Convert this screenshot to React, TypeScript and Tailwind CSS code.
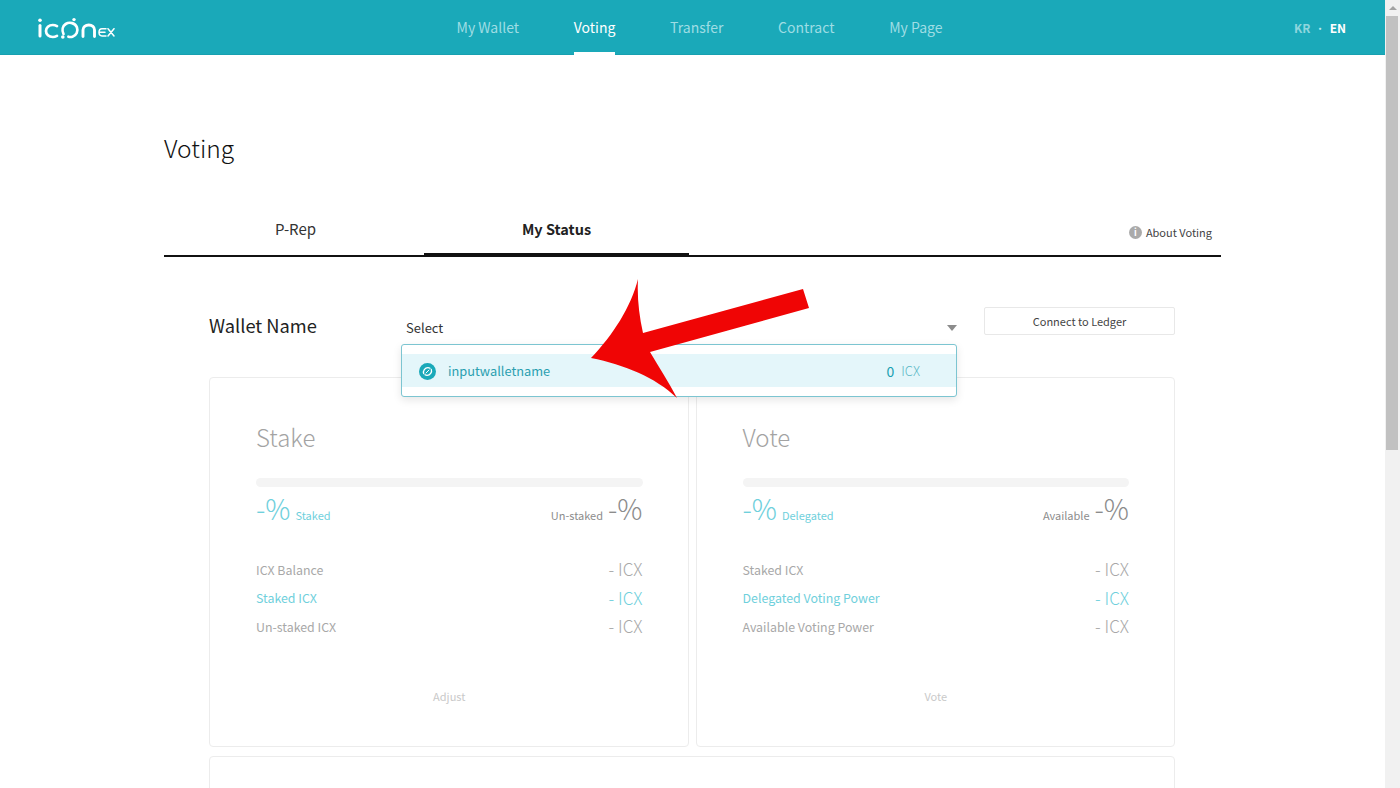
const navItems = ['My Wallet', 'Voting', 'Transfer', 'Contract', 'My Page']

function Logo() {
  return (
    <svg width="78" height="22" viewBox="0 0 78 22" fill="none" stroke="#fff" strokeLinecap="round" className="block">
      <circle cx="2" cy="3.300" r="1.800" fill="#fff" stroke="none" />
      <path d="M2 8.500v10.500" strokeWidth="3" />
      <path d="M19 9.200c-1.400-.8-2.800-1.200-4.200-1.200-4 0-6.800 2.700-6.800 6s2.800 6 6.800 6c1.400 0 2.800-.4 4.200-1.200" strokeWidth="2.700" />
      <path d="M25.500 17c-1.800-3.800-.9-8 2.200-10 4-2.600 9.500-.9 11.200 3.300 1.500 3.900-.5 8.200-4.400 9.400-1.400.4-2.800.4-4.100 0" strokeWidth="2.700" />
      <circle cx="24.800" cy="20" r="1.800" fill="#fff" stroke="none" />
      <circle cx="36" cy="2.600" r="1.700" fill="#fff" stroke="none" />
      <path d="M45 19.500v-6.500c0-3 2.500-5 5.800-5s5.700 2 5.700 5v6.500" strokeWidth="2.900" />
      <path d="M68 11.700h-4c-1.600 0-3 1.500-3 3.600s1.400 3.600 3 3.600h4M61.500 15.300h5.500" strokeWidth="1.500" />
      <path d="M70 11.700l6 7.200M76 11.700l-6 7.200" strokeWidth="1.500" />
    </svg>
  )
}

function WalletIcon() {
  return (
    <svg width="17" height="17" viewBox="0 0 17 17" fill="none" stroke="#fff" strokeLinecap="round">
      <circle cx="8.500" cy="8.500" r="8.500" fill="#1aa9b9" stroke="none" />
      <path d="M4.700 10.600c-1-2.800 1.200-6 4.200-6 .8 0 1.500.2 2.100.6" strokeWidth="1.300" />
      <path d="M12.300 6.400c1 2.800-1.200 6-4.200 6-.8 0-1.500-.2-2.100-.6" strokeWidth="1.300" />
      <path d="M7 10l3-3" strokeWidth="1" />
    </svg>
  )
}

function Arrow() {
  return (
    <svg width="230" height="130" viewBox="0 0 230 130" className="absolute left-[585px] top-[275px] z-20">
      <path
        d="M6 83 C28 60 46 32 53 4 C52 22 54 40 58 58 L218 14 L224 33 L65 77 C74 92 84 108 92 123 C70 102 40 90 6 83 Z"
        fill="#f00505"
      />
    </svg>
  )
}

function Row({ label, accent }: { label: string; accent?: boolean }) {
  return (
    <div className={`flex h-[28.500px] items-center justify-between ${accent ? 'text-[#6fd0dc]' : 'text-[#a8a8a8]'}`}>
      <span className="text-[12.400px]">{label}</span>
      <span className="pb-[3px] text-[17px] font-light">- ICX</span>
    </div>
  )
}

function StatCard({
  title,
  left,
  right,
  rows,
  action,
}: {
  title: string
  left: string
  right: string
  rows: string[]
  action: string
}) {
  return (
    <div className="h-[370px] rounded-[4px] border border-[#ececec] pl-[46px] pr-[45px] pt-[42px]">
      <h3 className="text-[24px] leading-[34px] font-light text-[#a3a3a3]">{title}</h3>
      <div className="mt-[24px] h-[9px] rounded-full bg-[#f4f4f4]" />
      <div className="mt-[3px] flex h-[36px] items-center justify-between">
        <div className="flex items-baseline gap-[5px] text-[#6fd0dc]">
          <span className="text-[28px] leading-[36px] font-light">-%</span>
          <span className="text-[11px]">{left}</span>
        </div>
        <div className="flex items-baseline gap-[5px] text-[#8c8c8c]">
          <span className="text-[11px]">{right}</span>
          <span className="text-[28px] leading-[36px] font-light">-%</span>
        </div>
      </div>
      <div className="mt-[30px]">
        {rows.map((r, i) => (
          <Row key={r} label={r} accent={i === 1} />
        ))}
      </div>
      <div className="mt-[46px] text-center text-[11px] text-[#c9c9c9]">{action}</div>
    </div>
  )
}

export default function App() {
  return (
    <div className="relative flex h-[788px] overflow-hidden bg-white font-['Noto_Sans_CJK_KR','Noto_Sans',sans-serif]">
      <div className="w-[1385px] shrink-0">
        {/* Header */}
        <header className="relative flex h-[55px] items-start justify-center border-b border-[#17a0b0] bg-[#1aa9b9] pl-[14px]">
          <div className="absolute left-[38px] top-[17px]">
            <Logo />
          </div>
          <nav className="flex h-[55px] gap-[54.700px]">
            {navItems.map((item) => (
              <a
                key={item}
                className={`flex h-full items-center border-b-[3px] pt-[2px] text-[14px] ${
                  item === 'Voting' ? 'border-white text-white' : 'border-transparent text-[#9fdde4]'
                }`}
              >
                {item}
              </a>
            ))}
          </nav>
          <div className="absolute right-[39px] top-[19px] flex items-center gap-[6px] text-[12px] font-bold">
            <span className="text-[#8fd6de]">KR</span>
            <span className="text-[#bfe8ed]">·</span>
            <span className="text-white">EN</span>
          </div>
        </header>

        <main className="mx-auto w-[1057px]">
          <h1 className="pt-[75px] text-[24.500px] leading-[36px] font-light text-[#111]">Voting</h1>

          {/* Tabs */}
          <div className="mt-[47px] flex h-[44px] items-stretch border-b-2 border-[#111]">
            <button className="w-[260px] pb-[9px] pl-[3px] text-[15px] text-[#333]">P-Rep</button>
            <button className="w-[265px] pb-[11px] text-[14.500px] font-bold text-[#222] shadow-[inset_0_-2px_0_#111]">
              My Status
            </button>
            <div className="ml-auto flex items-center gap-[4px] pb-[4px] pr-[9px] text-[11px] text-[#444]">
              <span className="flex h-[13px] w-[13px] items-center justify-center rounded-full bg-[#aaa] text-[9px] font-bold leading-none text-white">
                i
              </span>
              About Voting
            </div>
          </div>

          {/* Wallet row */}
          <div className="relative ml-[45px] mt-[50px] flex h-[30px] w-[966px] items-start">
            <span className="w-[192px] pt-px text-[18.300px] leading-[34px] text-[#222]">Wallet Name</span>
            <div className="flex w-[556px] items-center justify-between pl-[5px] pt-[11px]">
              <span className="text-[13px] leading-[19px] text-[#333]">Select</span>
              <span className="h-0 w-0 border-x-[5px] border-t-[6px] border-x-transparent border-t-[#8c8c8c]" />
            </div>
            <button className="ml-[27px] h-[28px] w-[191px] rounded-[2px] border border-[#e8e8e8] text-[11px] text-[#444]">
              Connect to Ledger
            </button>

            {/* Dropdown */}
            <div className="absolute left-[192px] top-[37px] z-10 w-[556px] rounded-[3px] border border-[#7cc5d1] bg-white py-[9px] shadow-[0_3px_8px_rgba(0,0,0,0.1)]">
              <div className="flex h-[33px] items-center bg-[#e4f6fa] pl-[17px] pr-[36px] pt-px">
                <WalletIcon />
                <span className="ml-[12px] text-[12.800px] text-[#2a9fb0]">inputwalletname</span>
                <span className="ml-auto text-[14px] text-[#1a9fb1]">0</span>
                <span className="ml-[7px] text-[13px] font-light text-[#5ab8c6]">ICX</span>
              </div>
            </div>
          </div>

          {/* Cards */}
          <div className="ml-[45px] mt-[40px] grid w-[966px] grid-cols-2 gap-x-[7px] gap-y-[9px]">
            <StatCard
              title="Stake"
              left="Staked"
              right="Un-staked"
              rows={['ICX Balance', 'Staked ICX', 'Un-staked ICX']}
              action="Adjust"
            />
            <StatCard
              title="Vote"
              left="Delegated"
              right="Available"
              rows={['Staked ICX', 'Delegated Voting Power', 'Available Voting Power']}
              action="Vote"
            />
            <div className="col-span-2 h-[200px] rounded-[4px] border border-[#ececec]" />
          </div>
        </main>
      </div>

      {/* Scrollbar */}
      <div className="flex w-[15px] shrink-0 flex-col bg-[#f1f1f1]">
        <div className="flex h-[16px] items-center justify-center">
          <span className="h-0 w-0 border-x-[4px] border-b-[4px] border-x-transparent border-b-[#a3a3a3]" />
        </div>
        <div className="ml-px mr-[2px] h-[434px] bg-[#c1c1c1]" />
      </div>

      <Arrow />
    </div>
  )
}
